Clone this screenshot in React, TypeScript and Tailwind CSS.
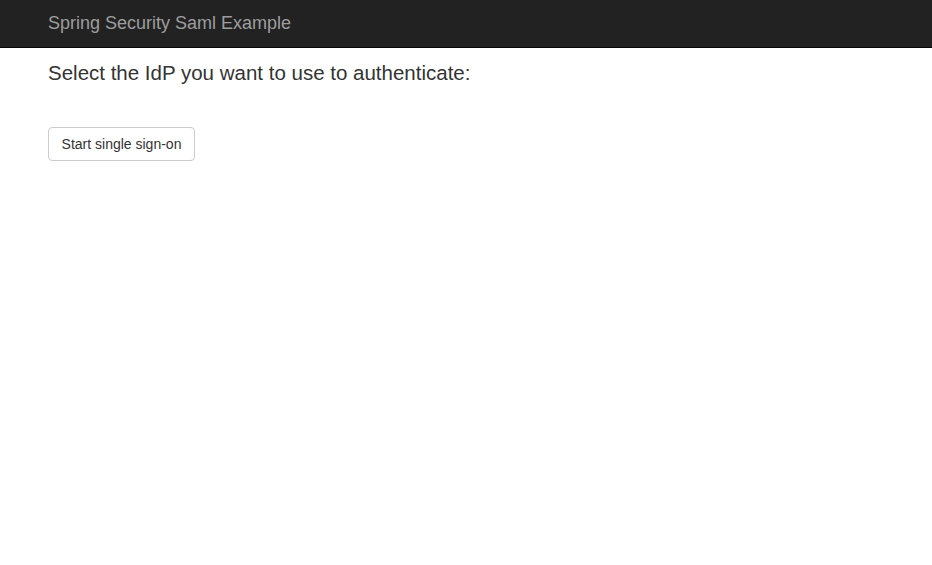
import React from 'react';

export default function App() {
  return (
    <div className="min-h-screen bg-white text-[#333]" style={{ fontFamily: '"Liberation Sans", Arial, sans-serif' }}>
      <nav className="h-[48px] bg-[#222] border-b border-[#080808]">
        <div className="px-[48px] flex items-center h-full">
          <a className="text-[18px] leading-[20px] text-[#9d9d9d] -mt-[2px]" href="#">
            Spring Security Saml Example
          </a>
        </div>
      </nav>
      <div className="px-[48px]">
        <h4 className="text-[20.5px] leading-[22px] mt-[14px] mb-[43px] font-normal">
          Select the IdP you want to use to authenticate:
        </h4>
        <button
          type="button"
          className="border border-[#ccc] rounded-[4px] bg-white px-[12px] w-[147px] h-[34px] text-[14px] leading-[20px] text-[#333]"
        >
          Start single sign-on
        </button>
      </div>
    </div>
  );
}
